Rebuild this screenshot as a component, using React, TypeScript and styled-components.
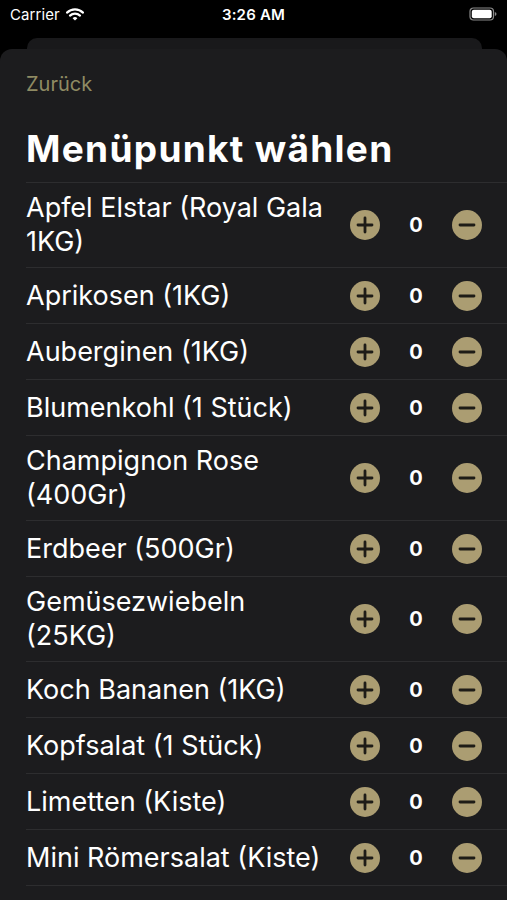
import React from "react";
import styled, { createGlobalStyle } from "styled-components";

const GlobalStyle = createGlobalStyle`
  html, body { margin: 0; padding: 0; background: #000; }
  body { font-family: Inter, "Noto Sans", "Liberation Sans", sans-serif; -webkit-font-smoothing: antialiased; }
  * { box-sizing: border-box; }
`;

const Page = styled.div`
  width: 507px;
  height: 900px;
  overflow: hidden;
  background: #000;
  display: flex;
  flex-direction: column;
`;

const StatusBar = styled.div`
  height: 28px;
  padding: 0 10px;
  display: grid;
  grid-template-columns: 1fr auto 1fr;
  align-items: center;
  color: #fff;
  font-size: 15px;
`;

const Carrier = styled.div`
  display: flex;
  align-items: center;
  gap: 6px;
  font-weight: 400;
  letter-spacing: 0.1px;
`;

const Clock = styled.div`
  font-weight: 600;
  letter-spacing: 0.2px;
`;

const BatteryWrap = styled.div`
  display: flex;
  justify-content: flex-end;
`;

const BackCard = styled.div`
  margin: 10px 25px 0 27px;
  height: 11px;
  background: #19191b;
  border-radius: 10px 10px 0 0;
`;

const Sheet = styled.div`
  flex: 1;
  background: #1c1c1e;
  border-radius: 12px 12px 0 0;
  padding-left: 26px;
  display: flex;
  flex-direction: column;
`;

const BackLink = styled.div`
  margin-top: 23px;
  color: #8f8b63;
  font-size: 20px;
  line-height: 24px;
`;

const Title = styled.h1`
  margin: 31px 0 0;
  color: #fff;
  font-size: 37px;
  font-weight: 700;
  line-height: 44px;
  letter-spacing: 1.3px;
`;

const List = styled.div`
  margin-top: 11px;
  border-top: 1px solid #2d2d2f;
`;

const Row = styled.div`
  display: flex;
  align-items: center;
  min-height: 56px;
  padding: 8px 25px 8px 0;
  border-bottom: 1px solid #2d2d2f;
`;

const Label = styled.div`
  flex: 1;
  padding-right: 16px;
  color: #fff;
  font-size: 27px;
  line-height: 34px;
  letter-spacing: 0;
`;

const Controls = styled.div`
  display: flex;
  align-items: center;
`;

const RoundButton = styled.button`
  width: 30px;
  height: 30px;
  padding: 0;
  border: none;
  background: none;
  display: block;
`;

const Count = styled.div`
  width: 72px;
  text-align: center;
  color: #fff;
  font-size: 20px;
  font-weight: 700;
`;

const Wifi = () => (
  <svg width="18" height="13" viewBox="0 0 18 13">
    <path d="M1 4.6 A11.5 11.5 0 0 1 17 4.6" fill="none" stroke="#fff" strokeWidth="2.2" strokeLinecap="round" />
    <path d="M4 7.6 A7.3 7.3 0 0 1 14 7.6" fill="none" stroke="#fff" strokeWidth="2.2" strokeLinecap="round" />
    <path d="M6.6 10.3 L9 12.6 L11.4 10.3 A3.4 3.4 0 0 0 6.6 10.3 Z" fill="#fff" />
  </svg>
);

const Battery = () => (
  <svg width="28" height="14" viewBox="0 0 28 14">
    <rect x="1" y="1" width="23.5" height="12" rx="3.5" fill="none" stroke="#8a8a8a" strokeWidth="1.2" />
    <rect x="2.8" y="2.8" width="19.9" height="8.4" rx="2" fill="#fff" />
    <path d="M25.8 5 Q27.5 5.4 27.5 7 Q27.5 8.6 25.8 9 Z" fill="#8a8a8a" />
  </svg>
);

const CircleIcon = ({ plus }: { plus: boolean }) => (
  <svg width="30" height="30" viewBox="0 0 30 30">
    <circle cx="15" cy="15" r="15" fill="#ab9d72" />
    <line x1="8" y1="15" x2="22" y2="15" stroke="#1e1c17" strokeWidth="2.8" strokeLinecap="round" />
    {plus && <line x1="15" y1="8" x2="15" y2="22" stroke="#1e1c17" strokeWidth="2.8" strokeLinecap="round" />}
  </svg>
);

const items = [
  "Apfel Elstar (Royal Gala 1KG)",
  "Aprikosen (1KG)",
  "Auberginen (1KG)",
  "Blumenkohl (1 Stück)",
  "Champignon Rose (400Gr)",
  "Erdbeer (500Gr)",
  "Gemüsezwiebeln (25KG)",
  "Koch Bananen (1KG)",
  "Kopfsalat (1 Stück)",
  "Limetten (Kiste)",
  "Mini Römersalat (Kiste)",
];

export default function App() {
  return (
    <Page>
      <GlobalStyle />
      <StatusBar>
        <Carrier>
          Carrier <Wifi />
        </Carrier>
        <Clock>3:26 AM</Clock>
        <BatteryWrap>
          <Battery />
        </BatteryWrap>
      </StatusBar>
      <BackCard />
      <Sheet>
        <BackLink>Zurück</BackLink>
        <Title>Menüpunkt wählen</Title>
        <List>
          {items.map((name) => (
            <Row key={name}>
              <Label>{name}</Label>
              <Controls>
                <RoundButton aria-label="Mehr">
                  <CircleIcon plus />
                </RoundButton>
                <Count>0</Count>
                <RoundButton aria-label="Weniger">
                  <CircleIcon plus={false} />
                </RoundButton>
              </Controls>
            </Row>
          ))}
        </List>
      </Sheet>
    </Page>
  );
}
